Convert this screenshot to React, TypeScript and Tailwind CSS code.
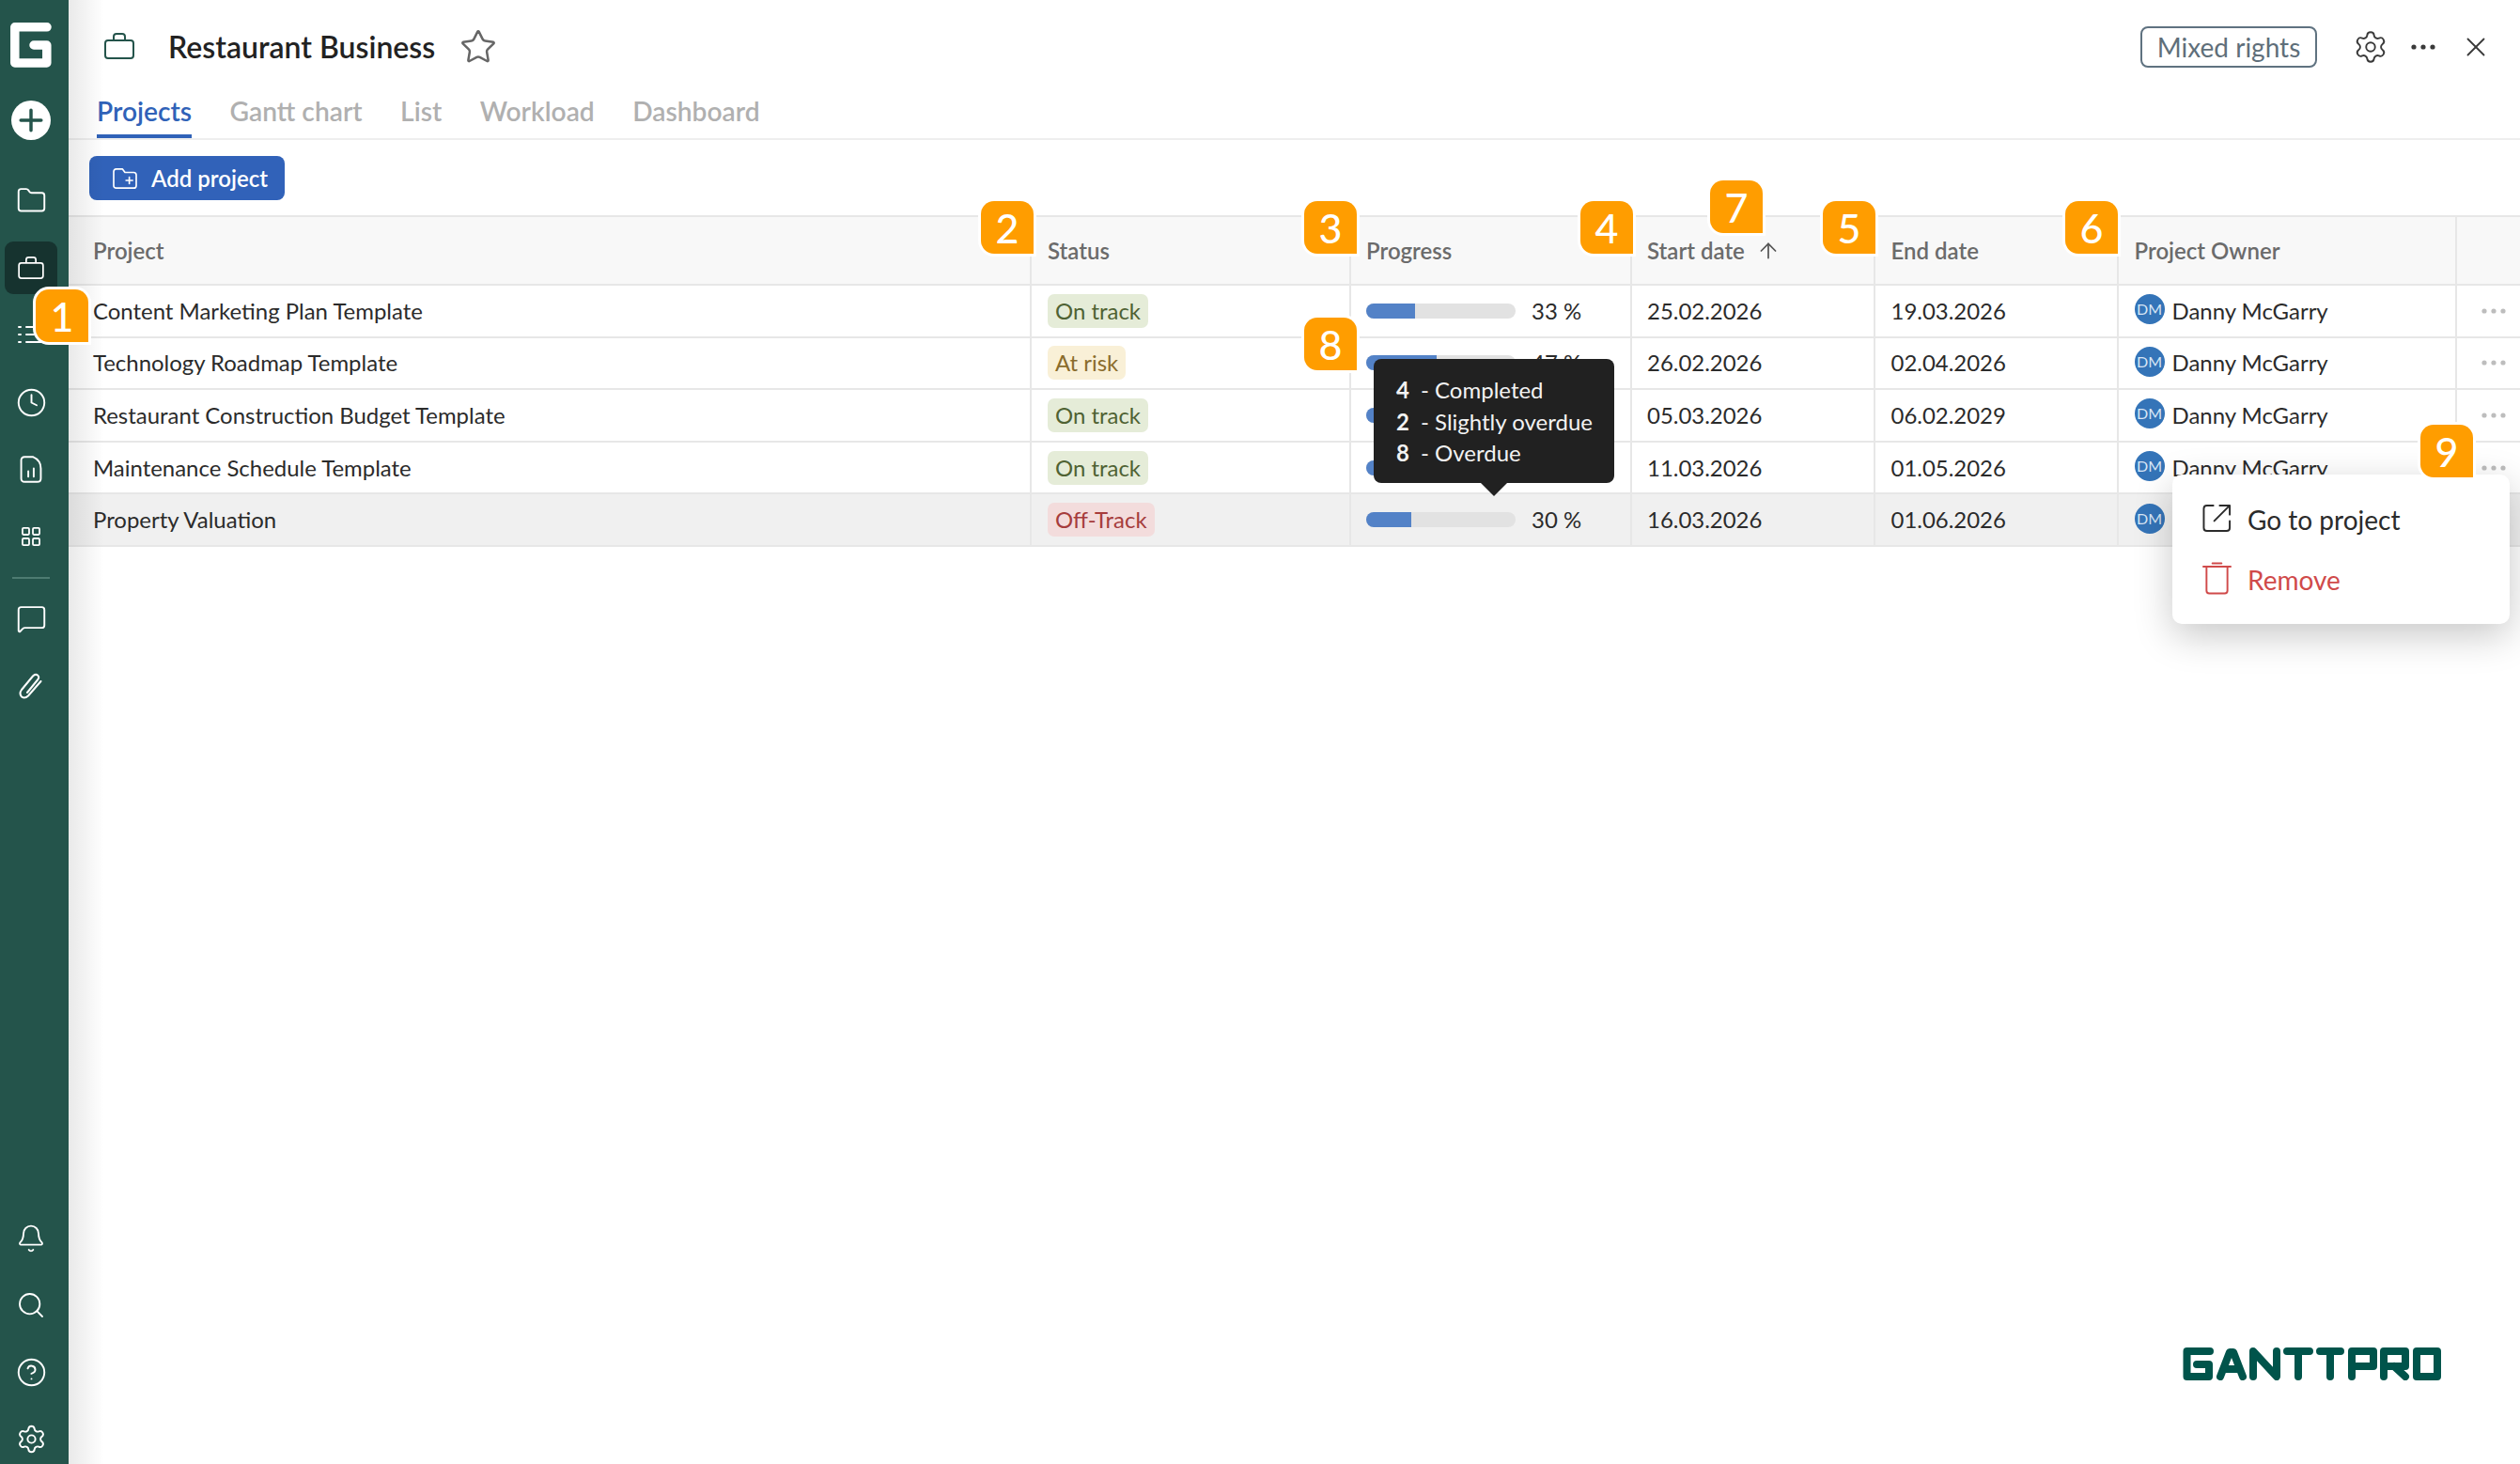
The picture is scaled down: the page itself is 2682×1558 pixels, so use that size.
import {
  ArrowUp,
  Bell,
  CircleHelp,
  Clock,
  Folder,
  MessageSquare,
  Search,
  Settings,
  Star,
  X,
} from 'lucide-react';

interface Project {
  name: string;
  status: string;
  progress: number;
  start: string;
  end: string;
}

const projects: Project[] = [
  { name: 'Content Marketing Plan Template', status: 'On track', progress: 33, start: '25.02.2026', end: '19.03.2026' },
  { name: 'Technology Roadmap Template', status: 'At risk', progress: 47, start: '26.02.2026', end: '02.04.2026' },
  { name: 'Restaurant Construction Budget Template', status: 'On track', progress: 50, start: '05.03.2026', end: '06.02.2029' },
  { name: 'Maintenance Schedule Template', status: 'On track', progress: 60, start: '11.03.2026', end: '01.05.2026' },
  { name: 'Property Valuation', status: 'Off-Track', progress: 30, start: '16.03.2026', end: '01.06.2026' },
];

const statusStyles: Record<string, string> = {
  'On track': 'bg-[#e5ecd8] text-[#4f6233]',
  'At risk': 'bg-[#f9f0d7] text-[#8a6c2c]',
  'Off-Track': 'bg-[#f3dcdc] text-[#a63c3c]',
};

const SideIcon = ({ children, active }: { children: React.ReactNode; active?: boolean }) => (
  <div className={`flex h-[56px] w-[56px] items-center justify-center rounded-[9px] text-white ${active ? 'bg-[#16332f]' : ''}`}>
    {children}
  </div>
);

const Dots = ({ className }: { className: string }) => (
  <svg viewBox="0 0 26 6" className={className} fill="currentColor">
    <circle cx="3" cy="3" r="2.6" />
    <circle cx="13" cy="3" r="2.6" />
    <circle cx="23" cy="3" r="2.6" />
  </svg>
);

const Case = ({ className }: { className: string }) => (
  <svg viewBox="0 0 32 28" className={className} fill="none" stroke="currentColor" strokeWidth="2">
    <rect x="1" y="8" width="30" height="19" rx="3" />
    <path d="M10 8 V4 Q10 1 13 1 H19 Q22 1 22 4 V8" />
  </svg>
);

const Badge = ({ value, className }: { value: string; className: string }) => (
  <div
    className={`absolute z-20 flex h-[56px] w-[56px] items-center justify-center rounded-[14px] rounded-br-none bg-[#ff9d00] text-[43px] font-medium leading-none text-white shadow-[0_0_0_3px_#ffffff] ${className}`}
  >
    {value}
  </div>
);

const Sidebar = () => (
  <aside className="flex h-full w-[73px] shrink-0 flex-col items-center bg-[#24544b] pt-[24px] pr-[7px]">
    <svg viewBox="0 0 44 48" className="h-[48px] w-[44px]" fill="none" stroke="#ffffff" strokeWidth="9.5" strokeLinejoin="round" strokeLinecap="round">
      <path d="M39 4.8 H4.8 V43 H38.8 V24 H25" />
    </svg>
    <div className="mt-[35px] flex h-[42px] w-[42px] items-center justify-center rounded-full bg-white">
      <svg viewBox="0 0 24 24" className="h-[26px] w-[26px]" fill="none" stroke="#24544b" strokeWidth="3.2" strokeLinecap="round">
        <path d="M12 2 V22 M2 12 H22" />
      </svg>
    </div>
    <div className="mt-[36px] flex flex-col items-center gap-[15.7px]">
      <SideIcon><Folder size={33} strokeWidth={1.4} /></SideIcon>
      <SideIcon active><Case className="h-[24px] w-[28px]" /></SideIcon>
      <SideIcon>
        <svg viewBox="0 0 28 20" className="h-[20px] w-[28px]" fill="none" stroke="currentColor" strokeWidth="2" strokeLinecap="round">
          <path d="M9 2 H27 M9 10 H27 M9 18 H27 M1 2 H3 M1 10 H3 M1 18 H3" />
        </svg>
      </SideIcon>
      <SideIcon><Clock size={33} strokeWidth={1.4} /></SideIcon>
      <SideIcon>
        <svg viewBox="0 0 24 30" className="h-[29px] w-[24px]" fill="none" stroke="currentColor" strokeWidth="2" strokeLinejoin="round" strokeLinecap="round">
          <path d="M5 1.2 H14 Q22.8 5 22.8 14 V25 Q22.8 28.8 19 28.8 H5 Q1.2 28.8 1.2 25 V5 Q1.2 1.2 5 1.2 Z M9 23 V17 M15 23 V14" />
        </svg>
      </SideIcon>
      <SideIcon>
        <svg viewBox="0 0 21 21" className="h-[20px] w-[20px]" fill="none" stroke="currentColor" strokeWidth="1.9">
          <rect x="1" y="1" width="7.4" height="7.4" rx="1.2" />
          <rect x="12.6" y="1" width="7.4" height="7.4" rx="1.2" />
          <rect x="1" y="12.6" width="7.4" height="7.4" rx="1.2" />
          <rect x="12.6" y="12.6" width="7.4" height="7.4" rx="1.2" />
        </svg>
      </SideIcon>
      <div className="my-[-1px] h-[2px] w-[40px] bg-[#4d7b71]" />
      <SideIcon><MessageSquare size={33} strokeWidth={1.4} /></SideIcon>
      <SideIcon>
        <svg viewBox="0 0 26 29" className="h-[29px] w-[26px]" fill="none" stroke="currentColor" strokeWidth="2" strokeLinecap="round" strokeLinejoin="round">
          <path d="M9 21 L20 7.5 Q22.5 4.5 20 2.5 Q17.5 0.8 15 3.5 L3 18 Q0 22 3 25.5 Q6.5 28 10 24.5 L23.5 9" />
        </svg>
      </SideIcon>
    </div>
    <div className="mt-auto mb-[-1px] flex flex-col items-center gap-[15px]">
      <SideIcon><Bell size={32} strokeWidth={1.4} /></SideIcon>
      <SideIcon><Search size={32} strokeWidth={1.4} /></SideIcon>
      <SideIcon><CircleHelp size={33} strokeWidth={1.4} /></SideIcon>
      <SideIcon><Settings size={33} strokeWidth={1.4} /></SideIcon>
    </div>
  </aside>
);

const cellBorder = 'border-l-2 border-[#e7e7e7]';
const columns = 'grid grid-cols-[1023px_340px_299px_259px_259px_360px_69px]';

const Row = ({ project }: { project: Project }) => {
  const selected = project.name === 'Property Valuation';
  return (
    <div className={`${columns} h-[55.6px] border-b-2 border-[#e7e7e7] text-[23.95px] text-[#2b2b2b] ${selected ? 'bg-[#f0f0f0]' : ''}`}>
      <div className="flex items-center pl-[26px]">{project.name}</div>
      <div className={`${cellBorder} flex items-center pl-[17px]`}>
        <span className={`flex h-[36px] items-center rounded-[7px] px-[8px] ${statusStyles[project.status]}`}>{project.status}</span>
      </div>
      <div className={`${cellBorder} flex items-center pl-[16px]`}>
        <div className="h-[16px] w-[159px] overflow-hidden rounded-full bg-[#e2e2e2]">
          <div className="h-full bg-[#5382c7]" style={{ width: `${project.progress}%` }} />
        </div>
        <span className="ml-[17px]">{project.progress} %</span>
      </div>
      <div className={`${cellBorder} flex items-center pl-[16px]`}>{project.start}</div>
      <div className={`${cellBorder} flex items-center pl-[16.5px]`}>{project.end}</div>
      <div className={`${cellBorder} flex items-center pl-[16.5px]`}>
        <span className="mt-[-3px] flex h-[32px] w-[32px] items-center justify-center rounded-full bg-[#3474b8] text-[16px] text-[#d8e6f5]">DM</span>
        <span className="ml-[8px]">Danny McGarry</span>
      </div>
      <div className={`${cellBorder} flex items-center justify-center pl-[10px]`}>
        <Dots className="h-[6px] w-[26px] text-[#bdbdbd]" />
      </div>
    </div>
  );
};

const App = () => {
  return (
    <div className="relative flex h-[1558px] w-[2682px] overflow-hidden bg-white [font-family:Lato,sans-serif]">
      <Sidebar />
      <main className="relative flex min-w-0 flex-1 flex-col">
        <div className="pointer-events-none absolute inset-y-0 left-0 z-10 w-[38px] bg-gradient-to-r from-[#00000016] to-transparent" />

        <header className="flex h-[100px] shrink-0 items-center pr-[30px] pl-[38px]">
          <Case className="mt-[-2px] h-[28px] w-[32px] text-[#24544b]" />
          <h1 className="ml-[36px] text-[32px] font-semibold text-[#222222]">Restaurant Business</h1>
          <Star size={40} strokeWidth={1.5} className="ml-[26px] text-[#666666]" />
          <div className="ml-auto flex h-[44px] w-[188px] items-center justify-center rounded-[8px] border-2 border-[#5f7280] text-[28px] text-[#5f6f7a]">
            Mixed rights
          </div>
          <Settings size={38} strokeWidth={1.2} className="ml-[38px] text-[#3a3a3a]" />
          <Dots className="ml-[24px] h-[6px] w-[26px] text-[#3a3a3a]" />
          <X size={34} strokeWidth={1.3} className="ml-[26px] text-[#3a3a3a]" />
        </header>

        <nav className="flex h-[49px] shrink-0 items-start gap-[40.5px] border-b-2 border-[#eeeeee] pl-[30px] text-[28.2px] font-semibold text-[#b0b0b0]">
          <span className="flex h-[47px] items-center border-b-4 border-[#3062b8] pb-[7px] text-[#3062b8]">Projects</span>
          <span className="flex h-[47px] items-center border-b-4 border-transparent pb-[7px]">Gantt chart</span>
          <span className="flex h-[47px] items-center border-b-4 border-transparent pb-[7px]">List</span>
          <span className="flex h-[47px] items-center border-b-4 border-transparent pb-[7px]">Workload</span>
          <span className="flex h-[47px] items-center border-b-4 border-transparent pb-[7px]">Dashboard</span>
        </nav>

        <div className="flex h-[80px] shrink-0 items-start pt-[17px] pl-[22px]">
          <button className="flex h-[47px] w-[208px] items-center gap-[15px] rounded-[8px] bg-[#3162b9] pl-[25px] text-[24px] font-semibold text-white">
            <svg viewBox="0 0 28 26" className="h-[24px] w-[26px]" fill="none" stroke="currentColor" strokeWidth="1.8" strokeLinejoin="round" strokeLinecap="round">
              <path d="M4 2 H11 L14 6 H24 Q27 6 27 9 V21 Q27 24 24 24 H4 Q1 24 1 21 V5 Q1 2 4 2 Z M19 11.5 V19 M15.2 15.2 H22.8" />
            </svg>
            Add project
          </button>
        </div>

        <div className={`${columns} h-[75px] shrink-0 border-y-2 border-[#e7e7e7] bg-[#f8f8f8] text-[24px] font-semibold text-[#6b6b6b]`}>
          <div className="flex items-center pl-[26px]">Project</div>
          <div className={`${cellBorder} flex items-center pl-[17px]`}>Status</div>
          <div className={`${cellBorder} flex items-center pl-[16px]`}>Progress</div>
          <div className={`${cellBorder} flex items-center pl-[16px]`}>
            Start date
            <ArrowUp size={26} strokeWidth={1.6} className="ml-[12px] text-[#555555]" />
          </div>
          <div className={`${cellBorder} flex items-center pl-[16.5px]`}>End date</div>
          <div className={`${cellBorder} flex items-center pl-[16.5px]`}>Project Owner</div>
          <div className={cellBorder} />
        </div>

        {projects.map((project) => (
          <Row key={project.name} project={project} />
        ))}

        <div className="mt-auto flex justify-end pr-[84px] pb-[89px]">
          <svg viewBox="43 33 275 35" className="h-[35px] w-[275px]" fill="none" stroke="#00544b" strokeWidth="8" strokeLinecap="round" strokeLinejoin="round">
            <path d="M72 37 H47.5 V64 H71 V51 H58" />
            <path d="M83 64 L93 38 H97 L107 64 M89 56 H101" />
            <path d="M118 64 V37 L143 64 V37" />
            <path d="M154 37 H178 M166 37 V64" />
            <path d="M189 37 H211 M200 37 V64" />
            <path d="M223 64 V37 H246 V53 H223" />
            <path d="M257 64 V37 H280 V53 H257 M268 53 L280 64" />
            <path d="M292 37 H314 V64 H292 Z" />
          </svg>
        </div>
      </main>

      <div className="absolute top-[382px] left-[1462px] z-10 flex h-[132px] w-[256px] flex-col justify-center gap-[4.5px] rounded-[8px] bg-[#212121] pl-[24px] text-[24px] leading-[29px] text-[#f2f2f2]">
        <div><b className="inline-block w-[26px] font-bold">4</b>- Completed</div>
        <div><b className="inline-block w-[26px] font-bold">2</b>- Slightly overdue</div>
        <div><b className="inline-block w-[26px] font-bold">8</b>- Overdue</div>
        <div className="absolute top-[132px] left-[114px] h-0 w-0 border-x-[14px] border-t-[14px] border-x-transparent border-t-[#212121]" />
      </div>

      <div className="absolute top-[505px] left-[2312px] z-10 flex h-[159px] w-[359px] flex-col rounded-[10px] bg-white pt-[30px] pl-[32px] text-[28px] shadow-[0_12px_40px_rgba(0,0,0,0.22)]">
        <div className="flex h-[36px] items-center gap-[17px] text-[#2b2b2b]">
          <svg viewBox="0 0 32 32" className="mt-[-3px] h-[31px] w-[31px]" fill="none" stroke="currentColor" strokeWidth="2" strokeLinecap="round" strokeLinejoin="round">
            <path d="M12 2 H5 Q1.5 2 1.5 5.5 V26.5 Q1.5 30 5 30 H26.5 Q30 30 30 26.5 V19 M13 19 L30 2 M19 2 H30 V12" />
          </svg>
          Go to project
        </div>
        <div className="mt-[28px] flex h-[36px] items-center gap-[17px] text-[#d04a4a]">
          <svg viewBox="0 0 32 36" className="mt-[-3px] h-[35px] w-[31px]" fill="none" stroke="currentColor" strokeWidth="2" strokeLinecap="round" strokeLinejoin="round">
            <path d="M1 5 H31 M11 1.5 H21 M4.5 5 V31.5 Q4.5 34.5 7.5 34.5 H24.5 Q27.5 34.5 27.5 31.5 V5" />
          </svg>
          Remove
        </div>
      </div>

      <Badge value="1" className="top-[308px] left-[38px]" />
      <Badge value="2" className="top-[214px] left-[1044px]" />
      <Badge value="3" className="top-[214px] left-[1388px]" />
      <Badge value="4" className="top-[214px] left-[1682px]" />
      <Badge value="7" className="top-[192px] left-[1820px]" />
      <Badge value="5" className="top-[214px] left-[1940px]" />
      <Badge value="6" className="top-[214px] left-[2198px]" />
      <Badge value="8" className="top-[338px] left-[1388px]" />
      <Badge value="9" className="top-[452px] left-[2576px]" />
    </div>
  );
};

export default App;
